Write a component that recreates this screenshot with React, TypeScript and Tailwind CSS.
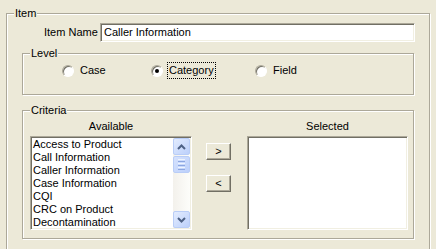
import type { ReactNode } from "react";

const categories = [
	"Access to Product",
	"Call Information",
	"Caller Information",
	"Case Information",
	"CQI",
	"CRC on Product",
	"Decontamination",
];

function Group({ label, className, children }: { label: string; className: string; children: ReactNode }) {
	return (
		<div
			className={`relative border border-[#aca899] shadow-[inset_1px_1px_0_#fff,1px_1px_0_#fff] ${className}`}
		>
			<span className="absolute -top-[7px] left-[7px] bg-[#ece9d8] px-[1px] leading-[13px]">{label}</span>
			{children}
		</div>
	);
}

function Radio({ label, checked, focused }: { label: string; checked?: boolean; focused?: boolean }) {
	return (
		<div className="flex items-center">
			<div className="flex h-[12px] w-[12px] items-center justify-center rounded-full border border-b-white border-l-[#aca899] border-r-white border-t-[#aca899] bg-white shadow-[inset_1px_1px_0_#716f64]">
				{checked && <div className="h-[4px] w-[4px] rounded-full bg-black" />}
			</div>
			<span
				className={`ml-[5px] px-[1px] py-[1px] leading-[13px] ${focused ? "outline outline-1 outline-dotted outline-black" : ""}`}
			>
				{label}
			</span>
		</div>
	);
}

const sunken =
	"border border-b-white border-l-[#aca899] border-r-white border-t-[#aca899] bg-white shadow-[inset_1px_1px_0_#716f64,inset_-1px_-1px_0_#f1efe2]";

function ScrollButton({ dir }: { dir: "up" | "down" }) {
	return (
		<div className="flex h-[17px] w-[17px] items-center justify-center rounded-[2px] border border-[#b9cdf7] bg-gradient-to-br from-[#e3ecfe] to-[#bcd0fb]">
			<svg width="9" height="6" viewBox="0 0 9 6">
				<path
					d={dir === "up" ? "M1 5 L4.5 1.5 L8 5" : "M1 1 L4.5 4.5 L8 1"}
					fill="none"
					stroke="#4d6185"
					strokeWidth="2"
				/>
			</svg>
		</div>
	);
}

function Button({ children }: { children: ReactNode }) {
	return (
		<div className="flex h-[17px] w-[25px] items-center justify-center border border-b-[#716f64] border-l-white border-r-[#716f64] border-t-white bg-[#ece9d8] shadow-[inset_-1px_-1px_0_#aca899] leading-none">
			{children}
		</div>
	);
}

export default function App() {
	return (
		<div className="h-[249px] w-[436px] overflow-hidden bg-[#ece9d8] pl-[6px] pt-[13px] font-['Liberation_Sans',Arial,sans-serif] text-[11px] text-black">
			<Group label="Item" className="h-[260px] w-[424px]">
				<div className="ml-[37px] mt-[9px] flex items-center">
					<span className="w-[56px] leading-[13px]">Item Name</span>
					<div className={`flex h-[19px] w-[315px] items-center pl-[3px] ${sunken}`}>Caller Information</div>
				</div>

				<Group label="Level" className="ml-[15px] mt-[11px] h-[42px] w-[392px]">
					<div className="ml-[39px] mt-[9px] flex">
						<div className="w-[89px]">
							<Radio label="Case" />
						</div>
						<div className="w-[104px]">
							<Radio label="Category" checked focused />
						</div>
						<Radio label="Field" />
					</div>
				</Group>

				<Group label="Criteria" className="ml-[15px] mt-[15px] h-[129px] w-[392px]">
					<div className="ml-[7px] mt-[9px] flex">
						<div className="w-[162px]">
							<div className="mb-[3px] text-center leading-[13px]">Available</div>
							<div className={`flex h-[94px] ${sunken}`}>
								<div className="flex-1 pl-[2px] pt-[1px]">
									{categories.map((c) => (
										<div key={c} className="h-[13px] leading-[13px]">
											{c}
										</div>
									))}
								</div>
								<div className="m-[1px] flex w-[17px] flex-col bg-gradient-to-r from-[#f3f1ec] to-[#fdfdfa]">
									<ScrollButton dir="up" />
									<div className="mt-[1px] flex h-[17px] w-[17px] flex-col items-center justify-center gap-[1px] rounded-[2px] border border-[#b9cdf7] bg-gradient-to-br from-[#d6e2fd] to-[#bcd0fb]">
										<div className="h-[1px] w-[7px] bg-[#eef4fe]" />
										<div className="h-[1px] w-[7px] bg-[#8ca6e0]" />
										<div className="h-[1px] w-[7px] bg-[#eef4fe]" />
										<div className="h-[1px] w-[7px] bg-[#8ca6e0]" />
										<div className="h-[1px] w-[7px] bg-[#eef4fe]" />
										<div className="h-[1px] w-[7px] bg-[#8ca6e0]" />
									</div>
									<div className="flex-1" />
									<ScrollButton dir="down" />
								</div>
							</div>
						</div>

						<div className="ml-[14px] mt-[23px] flex flex-col gap-[15px]">
							<Button>&gt;</Button>
							<Button>&lt;</Button>
						</div>

						<div className="ml-[16px] w-[161px]">
							<div className="mb-[3px] text-center leading-[13px]">Selected</div>
							<div className={`h-[94px] ${sunken}`} />
						</div>
					</div>
				</Group>
			</Group>
		</div>
	);
}
